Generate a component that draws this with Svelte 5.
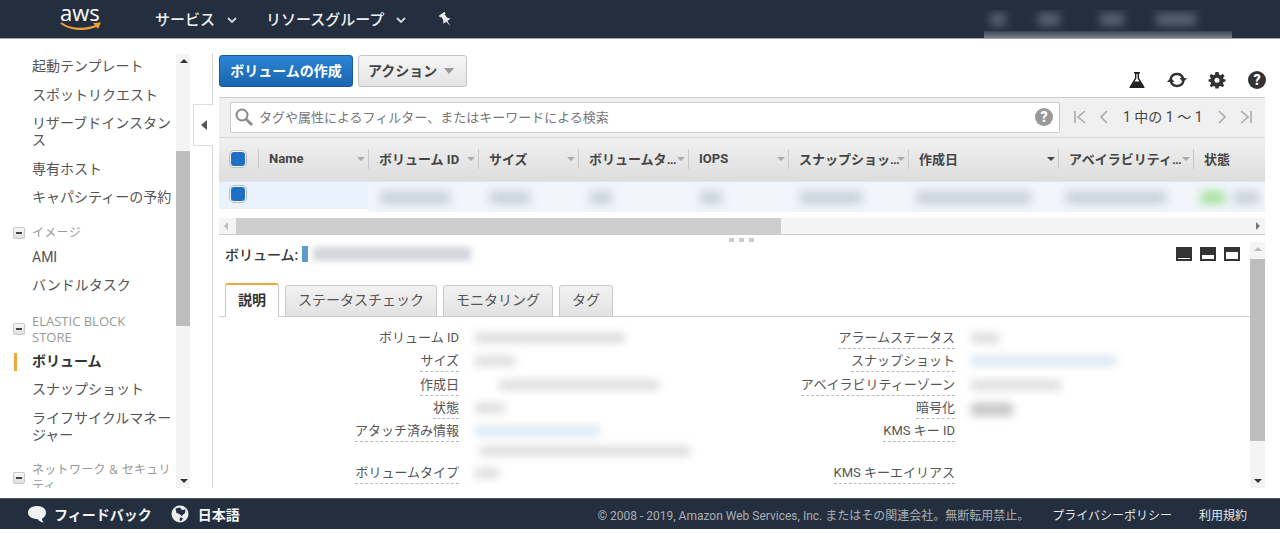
<script>
  const nav = [
    { label: '起動テンプレート' },
    { label: 'スポットリクエスト' },
    { label: 'リザーブドインスタンス' },
    { label: '専有ホスト' },
    { label: 'キャパシティーの予約' },
    { group: 'イメージ' },
    { label: 'AMI' },
    { label: 'バンドルタスク' },
    { group: 'ELASTIC BLOCK STORE', latin: true },
    { label: 'ボリューム', active: true },
    { label: 'スナップショット' },
    { label: 'ライフサイクルマネージャー' },
    { group: 'ネットワーク & セキュリティ' }
  ];

  const columns = [
    { name: 'Name', width: 110 },
    { name: 'ボリューム ID', width: 110 },
    { name: 'サイズ', width: 100 },
    { name: 'ボリュームタイプ', width: 110 },
    { name: 'IOPS', width: 100 },
    { name: 'スナップショット', width: 120 },
    { name: '作成日', width: 150, sorted: true },
    { name: 'アベイラビリティーゾーン', width: 135 },
    { name: '状態', width: 72, nosort: true }
  ];

  // blurred cell contents of the selected row, from the ID column on
  const cells = [
    { col: 1, left: 12, w: 70 },
    { col: 2, left: 12, w: 40 },
    { col: 3, left: 12, w: 22 },
    { col: 4, left: 12, w: 22 },
    { col: 5, left: 12, w: 62 },
    { col: 6, left: 8, w: 115 },
    { col: 7, left: 8, w: 100 },
    { col: 8, left: 8, w: 24, green: true, rest: 26 }
  ];

  const details = [
    { a: 'ボリューム ID', aw: 150, aplain: true, b: 'アラームステータス', bw: 28 },
    { a: 'サイズ', aw: 40, b: 'スナップショット', bw: 145, blink: true },
    { a: '作成日', aw: 160, al: 24, b: 'アベイラビリティーゾーン', bw: 90 },
    { a: '状態', aw: 30, b: '暗号化', bw: 42, dark: true },
    { a: 'アタッチ済み情報', aw: 125, alink: true, extra: true, b: 'KMS キー ID', bw: 0 },
    { a: 'ボリュームタイプ', aw: 24, b: 'KMS キーエイリアス', bw: 0 }
  ];

  const tabs = ['説明', 'ステータスチェック', 'モニタリング', 'タグ'];
</script>

<div class="page">
  <header class="topbar">
    <div class="logo">
      <span class="logo-text">aws</span>
      <svg class="smile" width="42" height="11" viewBox="0 0 42 11">
        <path d="M1 2 C10 9 26 10 38 4" fill="none" stroke="#f0a030" stroke-width="2.2" />
        <path d="M33 2 L41 1.5 L38 8 Z" fill="#f0a030" />
      </svg>
    </div>
    <span class="top-link services">サービス</span>
    <svg class="chev" width="10" height="6" viewBox="0 0 10 6"><path d="M1 1 L5 5 L9 1" fill="none" stroke="#d5d9dd" stroke-width="1.8" /></svg>
    <span class="top-link groups">リソースグループ</span>
    <svg class="chev" width="10" height="6" viewBox="0 0 10 6"><path d="M1 1 L5 5 L9 1" fill="none" stroke="#d5d9dd" stroke-width="1.8" /></svg>
    <svg class="pin" width="16" height="16" viewBox="0 0 16 16">
      <g transform="rotate(-35 8 8)">
        <path d="M4.5 0.5 H11.5 V2.5 H10.2 V6.5 L12.5 9.5 H8.7 L8 15.5 L7.3 9.5 H3.5 L5.8 6.5 V2.5 H4.5 Z" fill="#e8eaec" />
      </g>
    </svg>
    <div class="account">
      <div class="account-bits"><i></i><i></i><i></i><i></i></div>
      <div class="account-line"></div>
    </div>
  </header>

  <div class="body">
    <aside class="sidebar">
      <nav class="nav">
        {#each nav as item}
          {#if item.group}
            <div class="group">
              <span class="toggle"></span>
              <span class="group-name" class:latin={item.latin}>{item.group}</span>
            </div>
          {:else}
            <div class="nav-item" class:active={item.active}>{item.label}</div>
          {/if}
        {/each}
      </nav>
      <div class="vscroll side-scroll">
        <span class="arrow-up"></span>
        <div class="thumb"></div>
        <span class="arrow-down"></span>
      </div>
    </aside>

    <main class="main">
      <div class="collapse"><span></span></div>

      <div class="toolbar">
        <button class="btn primary">ボリュームの作成</button>
        <button class="btn action">アクション <span class="caret"></span></button>
        <div class="tools">
          <svg width="18" height="18" viewBox="0 0 18 18">
            <path d="M6 1 H12 V2.5 H11 V7 L16.5 16 Q17 17 16 17 H2 Q1 17 1.5 16 L7 7 V2.5 H6 Z M8.4 3 V7.4 L6.6 10.5 H11.4 L9.6 7.4 V3 Z" fill="#222" fill-rule="evenodd" />
          </svg>
          <svg width="22" height="18" viewBox="0 0 22 18">
            <path d="M4.6 8 C5.4 4.6 8 3 11 3 C13.8 3 16.4 4.6 17.2 8" fill="none" stroke="#333" stroke-width="2.5" />
            <path d="M13.5 7 H21 L17.2 11.5 Z" fill="#333" />
            <path d="M17.4 10 C16.6 13.4 14 15 11 15 C8.2 15 5.6 13.4 4.8 10" fill="none" stroke="#333" stroke-width="2.5" />
            <path d="M1 11 H8.5 L4.8 6.5 Z" fill="#333" />
          </svg>
          <svg width="18" height="18" viewBox="0 0 18 18">
            <path d="M7.4 1 H10.6 L11 3.4 L12.8 4.2 L14.8 2.8 L15.2 3.2 L16.6 5.2 L15 7 L15.6 8 L17.5 8.4 V10.6 L15.5 11 L14.9 12.6 L16.2 14.6 L14.4 16.2 L12.6 15 L11 15.6 L10.6 17.5 H7.4 L7 15.6 L5.4 15 L3.6 16.2 L1.8 14.6 L3.1 12.6 L2.5 11 L0.5 10.6 V8.4 L2.5 8 L3 7 L1.4 5.2 L3.2 2.8 L5.2 4.2 L7 3.4 Z M9 6.7 A2.5 2.5 0 1 0 9 11.7 A2.5 2.5 0 1 0 9 6.7 Z" fill="#333" fill-rule="evenodd" />
          </svg>
          <span class="help dark">?</span>
        </div>
      </div>

      <div class="filter">
        <div class="search">
          <svg width="20" height="20" viewBox="0 0 20 20">
            <circle cx="8" cy="8" r="5.5" fill="none" stroke="#8a8a8a" stroke-width="2" />
            <path d="M12 12 L18 18" stroke="#8a8a8a" stroke-width="2.6" />
          </svg>
          <span class="placeholder">タグや属性によるフィルター、またはキーワードによる検索</span>
          <span class="help grey">?</span>
        </div>
        <div class="pager">
          <svg width="14" height="16" viewBox="0 0 14 16"><path d="M2 2 V14 M12 2 L5 8 L12 14" fill="none" stroke="#aaa" stroke-width="1.6" /></svg>
          <svg width="10" height="16" viewBox="0 0 10 16"><path d="M8 2 L2 8 L8 14" fill="none" stroke="#aaa" stroke-width="1.6" /></svg>
          <span class="pager-text">1 中の 1 ～ 1</span>
          <svg width="10" height="16" viewBox="0 0 10 16"><path d="M2 2 L8 8 L2 14" fill="none" stroke="#aaa" stroke-width="1.6" /></svg>
          <svg width="14" height="16" viewBox="0 0 14 16"><path d="M12 2 V14 M2 2 L9 8 L2 14" fill="none" stroke="#aaa" stroke-width="1.6" /></svg>
        </div>
      </div>

      <div class="thead">
        <div class="check-cell"><span class="check"></span></div>
        {#each columns as col}
          <div class="th" style="width: {col.width}px">
            <span class="th-name">{col.name}</span>
            {#if !col.nosort}<span class="sort" class:sorted={col.sorted}></span>{/if}
          </div>
        {/each}
      </div>

      <div class="trow">
        <div class="check-cell"><span class="check"></span></div>
        <div class="name-cell"></div>
        <div class="row-values">
          {#each cells as cell}
            <div class="td" style="width: {columns[cell.col].width}px">
              <div class="blob" class:green={cell.green} style="width: {cell.w}px; margin-left: {cell.left}px"></div>
              {#if cell.rest}<div class="blob" style="width: {cell.rest}px; margin-left: 8px"></div>{/if}
            </div>
          {/each}
        </div>
      </div>

      <div class="hscroll">
        <span class="arrow-left"></span>
        <div class="hthumb"></div>
        <span class="arrow-right"></span>
      </div>

      <section class="pane">
        <div class="dots"><i></i><i></i><i></i></div>
        <div class="pane-content">
          <div class="pane-title">
            <span class="title-text">ボリューム:</span>
            <span class="title-bar"></span>
            <span class="title-blur"></span>
            <div class="views">
              <span class="view v1"></span>
              <span class="view v2"></span>
              <span class="view v3"></span>
            </div>
          </div>

          <div class="tabs">
            {#each tabs as tab, i}
              <div class="tab" class:current={i === 0}>{tab}</div>
            {/each}
          </div>

          <div class="details">
            {#each details as row}
              <div class="d-row">
                <div class="d-label"><span class:plain={row.aplain}>{row.a}</span></div>
                <div class="d-value">
                  <div class="vblob" class:link={row.alink} style="width: {row.aw}px; margin-left: {row.al || 0}px"></div>
                  {#if row.extra}<div class="vblob second" style="width: 210px"></div>{/if}
                </div>
                <div class="d-label right"><span>{row.b}</span></div>
                <div class="d-value">
                  {#if row.bw}
                    <div class="vblob" class:link={row.blink} class:dark={row.dark} style="width: {row.bw}px"></div>
                  {/if}
                </div>
              </div>
            {/each}
          </div>
        </div>
        <div class="vscroll pane-scroll">
          <span class="arrow-up light"></span>
          <div class="thumb"></div>
          <span class="arrow-down"></span>
        </div>
      </section>
    </main>
  </div>

  <footer class="footer">
    <svg class="bubble" width="20" height="18" viewBox="0 0 20 18">
      <path d="M10 1 C15 1 19 3.6 19 7.5 C19 11 16.5 13 15 13.5 C15 15 15.5 16.5 17 17.5 C14 17.5 11.5 15.5 10.5 14 C5 14 1 11.5 1 7.5 C1 3.6 5 1 10 1 Z" fill="#f2f3f4" />
    </svg>
    <span class="f-strong feedback">フィードバック</span>
    <svg class="globe" width="18" height="18" viewBox="0 0 18 18">
      <circle cx="9" cy="9" r="8.5" fill="#eceeef" />
      <path d="M4.5 3.5 L9 2.5 L11 5 L14.5 4.5 L14 8 L10.5 11 L8.5 9 L5.5 8 Z M9 12.5 L12 13 L10.5 16 L8.5 15.5 Z" fill="#232f3e" />
    </svg>
    <span class="f-strong lang">日本語</span>
    <span class="copyright">© 2008 - 2019, Amazon Web Services, Inc. またはその関連会社。無断転用禁止。</span>
    <span class="f-link privacy">プライバシーポリシー</span>
    <span class="f-link terms">利用規約</span>
  </footer>
</div>

<style>
  :global(body) {
    margin: 0;
    background: #fff;
  }

  .page {
    width: 1280px;
    height: 533px;
    display: flex;
    flex-direction: column;
    overflow: hidden;
    font-family: Roboto, "Noto Sans CJK JP", sans-serif;
    font-size: 14px;
    color: #444;
  }

  /* top bar */
  .topbar {
    height: 39px;
    flex: none;
    box-sizing: border-box;
    display: flex;
    align-items: center;
    background: #232f3e;
    border-bottom: 1px solid #9aa3ad;
    color: #fff;
  }

  .logo {
    width: 42px;
    margin-left: 60px;
    position: relative;
    height: 38px;
  }

  .logo-text {
    position: absolute;
    left: 0;
    top: 0;
    font-family: "Open Sans", sans-serif;
    font-size: 22px;
    line-height: 24px;
    color: #fff;
  }

  .smile {
    position: absolute;
    left: 0;
    top: 21px;
  }

  .top-link {
    font-size: 15px;
    font-weight: 500;
    color: #f0f1f2;
    margin-top: -2px;
  }

  .services {
    margin-left: 53px;
  }

  .groups {
    margin-left: 29px;
  }

  .chev {
    margin-left: 12px;
    margin-top: 2px;
  }

  .pin {
    margin-left: 32px;
    margin-top: 2px;
  }

  .account {
    margin-left: auto;
    margin-right: 48px;
    width: 248px;
    height: 28px;
    align-self: flex-end;
    position: relative;
    overflow: hidden;
  }

  .account-bits {
    display: flex;
    gap: 32px;
    padding: 3px 6px 0;
    filter: blur(4px);
  }

  .account-bits i {
    display: block;
    width: 16px;
    height: 13px;
    background: #56616f;
  }

  .account-bits i:nth-child(2) {
    width: 22px;
  }

  .account-bits i:nth-child(3) {
    margin-left: 8px;
    width: 24px;
  }

  .account-bits i:nth-child(4) {
    width: 40px;
  }

  .account-line {
    position: absolute;
    left: 0;
    right: 0;
    bottom: 0;
    height: 7px;
    background: linear-gradient(#3a4553, #76808c);
  }

  /* layout */
  .body {
    flex: none;
    height: 459px;
    display: flex;
    box-sizing: border-box;
    padding: 14px 0 10px;
  }

  .sidebar {
    width: 190px;
    flex: none;
    display: flex;
    overflow: hidden;
    margin-top: -1px;
  }

  .nav {
    width: 176px;
    flex: none;
    box-sizing: border-box;
    padding-right: 3px;
    overflow: hidden;
    height: 100%;
  }

  .nav-item {
    padding: 6px 0 5.5px 32px;
    line-height: 17px;
    color: #555;
    position: relative;
  }

  .nav-item.active {
    font-weight: 700;
    color: #333;
  }

  .nav-item.active::before {
    content: "";
    position: absolute;
    left: 14px;
    top: 6px;
    bottom: 4px;
    width: 3px;
    background: #eca93a;
  }

  .group {
    display: flex;
    align-items: center;
    margin-top: 12px;
    padding: 1px 0 2px 13px;
  }

  .toggle {
    width: 12px;
    height: 12px;
    flex: none;
    box-sizing: border-box;
    border: 1px solid #c8c8c8;
    border-radius: 2px;
    background: linear-gradient(#f8f8f8, #dedede);
    margin-right: 7px;
    position: relative;
  }

  .toggle::after {
    content: "";
    position: absolute;
    left: 2px;
    right: 2px;
    top: 4px;
    height: 2px;
    background: #444;
  }

  .group-name {
    font-family: "Open Sans", "Noto Sans CJK JP", sans-serif;
    font-size: 12px;
    letter-spacing: 0.3px;
    line-height: 16px;
    color: #999;
  }

  .group-name.latin {
    font-size: 13px;
    letter-spacing: 0;
    max-width: 120px;
  }

  .vscroll {
    width: 15px;
    flex: none;
    background: #f4f4f4;
    position: relative;
    display: block;
  }

  .side-scroll {
    margin-top: 2px;
  }

  .side-scroll .thumb {
    margin-top: 97px;
    height: 175px;
    background: #bdbdbd;
  }

  .arrow-up,
  .arrow-down {
    position: absolute;
    left: 4px;
    width: 0;
    height: 0;
    border-left: 4px solid transparent;
    border-right: 4px solid transparent;
  }

  .arrow-up {
    top: 5px;
    border-bottom: 4px solid #333;
  }

  .arrow-up.light {
    border-bottom-color: #bbb;
  }

  .arrow-down {
    bottom: 5px;
    border-top: 4px solid #333;
  }

  /* main column */
  .main {
    flex: 1;
    min-width: 0;
    margin-left: 22px;
    padding: 0 15px 0 6px;
    border-left: 1px solid #d5d5d5;
    position: relative;
    display: flex;
    flex-direction: column;
  }

  .collapse {
    position: absolute;
    left: -20px;
    top: 51px;
    width: 20px;
    height: 42px;
    box-sizing: border-box;
    background: #fff;
    border: 1px solid #ddd;
    border-right: none;
    display: flex;
    align-items: center;
    justify-content: center;
  }

  .collapse span {
    width: 0;
    height: 0;
    border-top: 5px solid transparent;
    border-bottom: 5px solid transparent;
    border-right: 6px solid #555;
  }

  .toolbar {
    height: 32px;
    margin-top: 2px;
    margin-bottom: 10px;
    display: flex;
    gap: 5px;
    flex: none;
  }

  .btn {
    height: 32px;
    box-sizing: border-box;
    padding: 0 9px 2px;
    border: 1px solid #c4c4c4;
    border-radius: 3px;
    background: linear-gradient(#f6f6f6, #e4e4e4);
    color: #444;
    font: inherit;
    font-weight: 700;
    display: flex;
    align-items: center;
    gap: 3px;
  }

  .btn.primary {
    width: 134px;
    background: linear-gradient(#2b85d4, #1a65b0);
    border-color: #185a9d;
    color: #fff;
    justify-content: center;
  }

  .btn.action {
    width: 109px;
    gap: 5px;
  }

  .caret {
    width: 0;
    height: 0;
    border-left: 5px solid transparent;
    border-right: 5px solid transparent;
    border-top: 6px solid #999;
    margin-left: 2px;
    margin-top: 2px;
  }

  .tools {
    margin-left: auto;
    margin-right: -1px;
    display: flex;
    align-items: center;
    gap: 20px;
    height: 20px;
    align-self: flex-end;
    margin-bottom: -3px;
  }

  .help {
    width: 18px;
    height: 18px;
    border-radius: 50%;
    color: #fff;
    display: flex;
    align-items: center;
    justify-content: center;
    font-size: 14px;
    font-weight: 900;
    line-height: 18px;
    flex: none;
  }

  .help.dark {
    background: #333;
    margin-left: 2px;
  }

  .help.grey {
    background: #999;
    margin-left: auto;
    margin-right: 6px;
  }

  /* filter row */
  .filter {
    height: 40px;
    flex: none;
    box-sizing: border-box;
    border-top: 1px solid #ccc;
    background: #f0f0f0;
    display: flex;
    align-items: center;
    padding-left: 11px;
  }

  .search {
    width: 830px;
    height: 31px;
    box-sizing: border-box;
    background: #fff;
    border: 1px solid #ccc;
    border-radius: 2px;
    display: flex;
    align-items: center;
    padding-left: 2px;
    gap: 5px;
    margin-top: -1px;
  }

  .search svg {
    margin-left: 1px;
    flex: none;
  }

  .placeholder {
    color: #777;
    font-size: 13px;
    margin-top: -2px;
  }

  .pager {
    display: flex;
    align-items: center;
    margin-left: 13px;
    margin-top: -2px;
    gap: 12px;
  }

  .pager-text {
    margin: -2px 2px 0;
    color: #444;
    white-space: nowrap;
  }

  /* table */
  .thead {
    height: 44px;
    flex: none;
    display: flex;
    align-items: center;
    box-sizing: border-box;
    padding-bottom: 2px;
    border-top: 1px solid #d8d8d8;
    background: linear-gradient(#f0f0f0, #dedede);
  }

  .check-cell {
    width: 39px;
    flex: none;
    box-sizing: border-box;
    padding-left: 10px;
    display: flex;
    align-items: center;
  }

  .check {
    width: 18px;
    height: 18px;
    box-sizing: border-box;
    border: 2px solid #f4f8fc;
    outline: 1px solid #bbb;
    outline-offset: -1px;
    border-radius: 5px;
    background: #1f6fc4;
    display: block;
  }

  .th {
    height: 20px;
    flex: none;
    box-sizing: border-box;
    border-left: 1px solid #c9c9c9;
    padding: 0 3px 0 10px;
    display: flex;
    align-items: center;
    font-size: 13px;
    font-weight: 700;
    color: #444;
  }

  .th-name {
    flex: 1;
    min-width: 0;
    margin-right: -4px;
    overflow: hidden;
    white-space: nowrap;
    text-overflow: ellipsis;
  }

  .sort {
    flex: none;
    width: 0;
    height: 0;
    border-left: 4px solid transparent;
    border-right: 4px solid transparent;
    border-top: 4px solid #aaa;
    position: relative;
  }

  .sort.sorted {
    border-top-color: #444;
  }

  .trow {
    height: 28px;
    flex: none;
    display: flex;
    align-items: center;
    background: #eaf3fc;
    border-top: 1px solid #dbe6f2;
    box-sizing: border-box;
    margin-bottom: 9px;
    position: relative;
  }

  .trow .check-cell {
    margin-top: -3px;
  }

  .name-cell {
    width: 110px;
    flex: none;
  }

  .row-values {
    display: flex;
    flex: none;
    align-self: flex-start;
    height: 30px;
    background: #f1f6fc;
    overflow: hidden;
  }

  .td {
    flex: none;
    display: flex;
    align-items: center;
  }

  .blob {
    height: 13px;
    background: #c8d0da;
    filter: blur(5px);
    flex: none;
  }

  .blob.green {
    background: #a8e29c;
  }

  .hscroll {
    height: 17px;
    flex: none;
    box-sizing: border-box;
    background: #f4f4f4;
    border-bottom: 1px solid #ccc;
    position: relative;
  }

  .hthumb {
    margin-left: 17px;
    width: 545px;
    height: 16px;
    background: #cecece;
  }

  .arrow-left,
  .arrow-right {
    position: absolute;
    top: 4px;
    width: 0;
    height: 0;
    border-top: 4px solid transparent;
    border-bottom: 4px solid transparent;
  }

  .arrow-left {
    left: 5px;
    border-right: 4px solid #bbb;
  }

  .arrow-right {
    right: 5px;
    border-left: 4px solid #777;
  }

  /* lower pane */
  .pane {
    flex: 1;
    min-height: 0;
    display: flex;
    position: relative;
    overflow: hidden;
  }

  .dots {
    position: absolute;
    left: 510px;
    top: 3px;
    display: flex;
    gap: 5px;
  }

  .dots i {
    display: block;
    width: 5px;
    height: 4px;
    background: #ccc;
  }

  .pane-content {
    flex: 1;
    min-width: 0;
    overflow: hidden;
  }

  .pane-title {
    height: 38px;
    display: flex;
    align-items: center;
    padding-left: 6px;
  }

  .title-text {
    font-weight: 500;
    color: #333;
  }

  .title-bar {
    width: 6px;
    height: 16px;
    background: #5d9bcb;
    margin-left: 4px;
  }

  .title-blur {
    width: 158px;
    height: 14px;
    margin-left: 5px;
    background: #d2d6db;
    filter: blur(3px);
  }

  .views {
    margin-left: auto;
    margin-right: 10px;
    display: flex;
    gap: 8px;
  }

  .view {
    width: 16px;
    height: 14px;
    background: #333;
    position: relative;
    display: block;
  }

  .view::after {
    content: "";
    position: absolute;
    background: #fff;
    left: 2px;
    right: 2px;
    bottom: 2px;
  }

  .v1::after {
    height: 1px;
  }

  .v2::after {
    height: 4px;
  }

  .v3::after {
    height: 7px;
  }

  .tabs {
    display: flex;
    align-items: flex-end;
    height: 34px;
    margin-top: 10px;
    padding-left: 6px;
    border-bottom: 1px solid #ccc;
    box-sizing: border-box;
    gap: 6px;
  }

  .tab {
    height: 31px;
    box-sizing: border-box;
    padding: 0 12px 4px;
    border: 1px solid #ccc;
    border-bottom: none;
    border-radius: 3px 3px 0 0;
    background: linear-gradient(#f2f2f2, #e2e2e2);
    color: #555;
    display: flex;
    align-items: center;
  }

  .tab.current {
    height: 34px;
    width: 54px;
    justify-content: center;
    padding: 0 0 4px;
    background: #fff;
    border-top: 2px solid #eca93a;
    color: #333;
    font-weight: 700;
    margin-bottom: -1px;
  }

  .details {
    padding-top: 10px;
  }

  .d-row {
    display: grid;
    grid-template-columns: 234px 339px 157px 1fr;
    min-height: 23.3px;
    font-size: 13px;
    line-height: 21px;
    padding-left: 6px;
  }

  .d-row:nth-child(5) {
    min-height: 42px;
  }

  .d-label {
    text-align: right;
    color: #555;
    white-space: nowrap;
  }

  .d-label span {
    display: inline-block;
    border-bottom: 1px dashed #bbb;
  }

  .d-label span.plain {
    border-bottom-color: transparent;
  }

  .d-value {
    padding-left: 16px;
  }

  .vblob {
    height: 10px;
    margin-top: 6px;
    background: #dcdcdc;
    filter: blur(4px);
  }

  .vblob.link {
    background: #dbe7f2;
  }

  .vblob.dark {
    background: #c6c6c6;
    height: 13px;
  }

  .vblob.second {
    margin-top: 10px;
    margin-left: 5px;
  }

  .pane-scroll {
    margin-top: 7px;
  }

  .pane-scroll .thumb {
    margin-top: 17px;
    height: 182px;
    background: #bdbdbd;
  }

  /* footer */
  .footer {
    height: 31px;
    flex: none;
    box-sizing: border-box;
    display: flex;
    align-items: center;
    background: #232f3e;
    border-top: 1px solid #4a5562;
  }

  .bubble {
    margin-left: 27px;
  }

  .f-strong {
    color: #f4f5f6;
    font-weight: 700;
  }

  .feedback {
    margin-left: 7px;
  }

  .globe {
    margin-left: 19px;
  }

  .lang {
    margin-left: 9px;
  }

  .copyright {
    margin-left: auto;
    font-size: 12px;
    color: #a9afb6;
  }

  .f-link {
    font-size: 12px;
    color: #e6e8ea;
  }

  .privacy {
    margin-left: 23px;
  }

  .terms {
    margin-left: 27px;
    margin-right: 33px;
  }
</style>
